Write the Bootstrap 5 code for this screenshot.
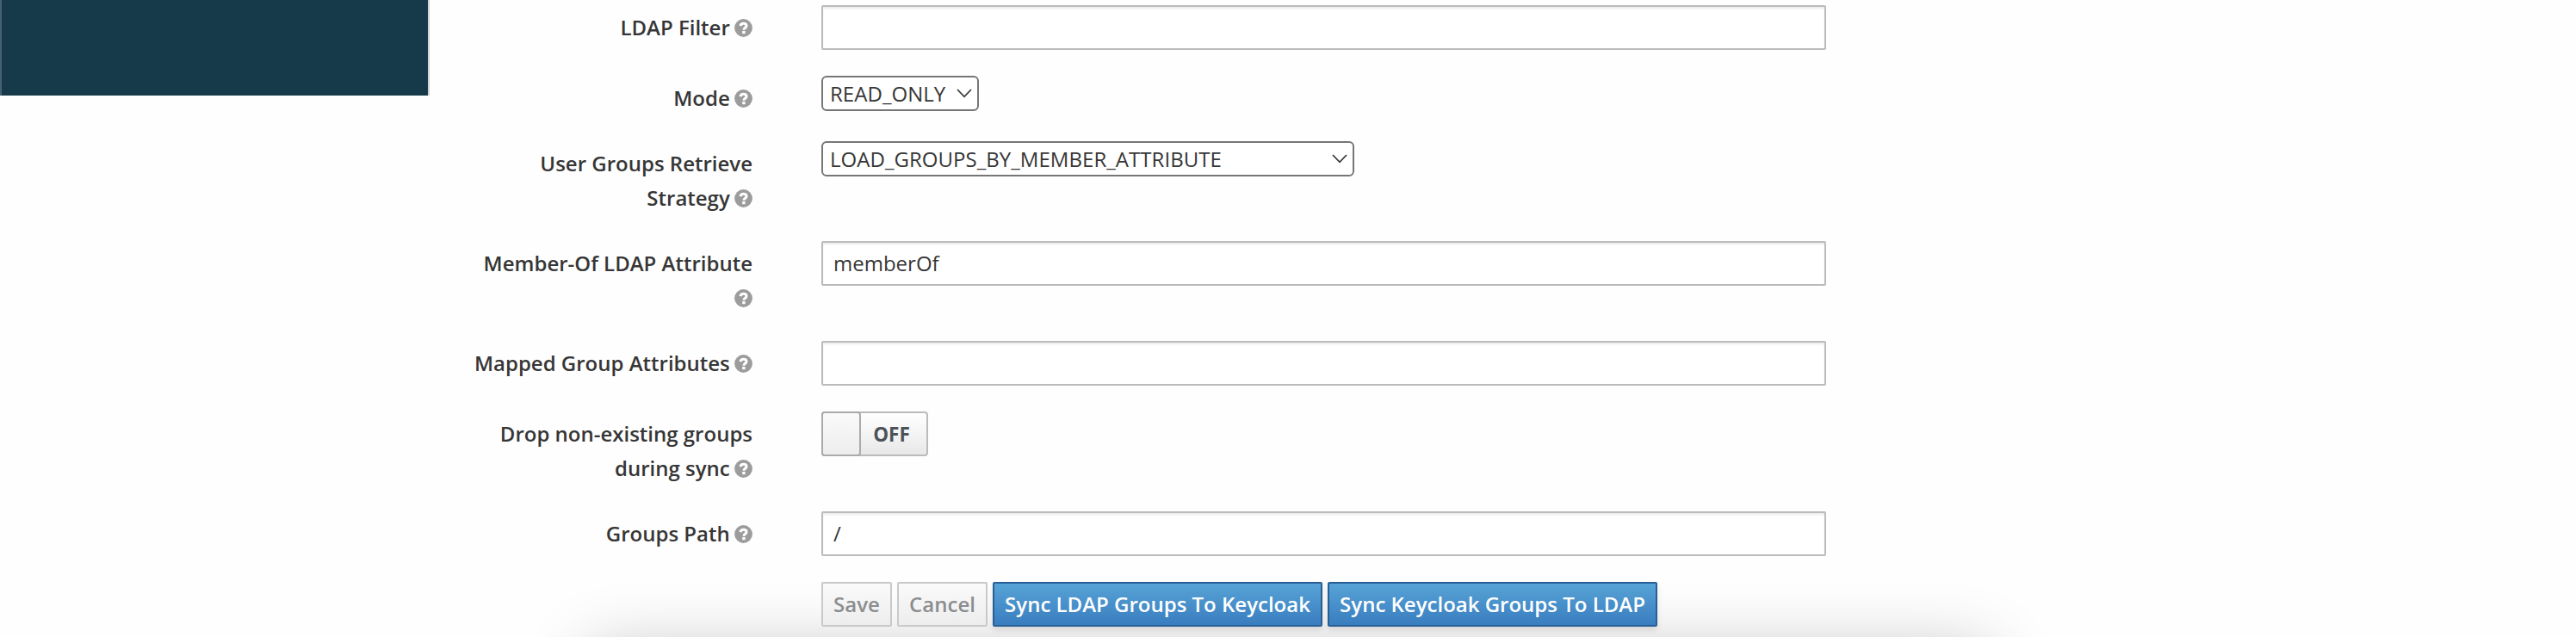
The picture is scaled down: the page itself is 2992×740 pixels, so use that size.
<!DOCTYPE html>
<html lang="en">
<head>
<meta charset="utf-8">
<title>LDAP group mapper</title>
<link href="https://cdn.jsdelivr.net/npm/bootstrap@5.3.0/dist/css/bootstrap.min.css" rel="stylesheet">
<style>
body{font-family:"Open Sans",sans-serif;font-size:24px;line-height:40px;color:#363636;background:#fefefe}
.shell{height:740px;z-index:0}
.side{width:499px;height:111px;background:#173a4b;border-left:2px solid #456270;border-right:2px solid #d1d1d1}
.mapper{width:1622px;padding-top:6px}
.field{display:grid;grid-template-columns:375px 1167px;column-gap:80px;margin-bottom:30px;align-items:start}
.field>label{padding-top:6px;font-weight:600;text-align:right}
.help{width:21px;height:21px;vertical-align:-2px;margin-left:-1px}
.form-control{height:52px;padding:2px 12px 4px;border:2px solid #bbb;border-radius:2px;font-size:24px;color:#363636;box-shadow:inset 0 2px 2px rgba(3,3,3,.075)}
.form-select{height:41px;padding:0 20px 0 8px;border:2px solid #767676;border-radius:6px;font-size:24px;line-height:37px;letter-spacing:.04px;color:#363636;background-color:#fff;background-image:url("data:image/svg+xml,%3Csvg xmlns='http://www.w3.org/2000/svg' viewBox='0 0 18 11'%3E%3Cpath d='M1 1l8 8.3L17 1' fill='none' stroke='%23363636' stroke-width='1.7'/%3E%3C/svg%3E");background-size:18px 11px;background-position:right 6px top 13px}
.mode{width:183px}
.strategy{width:619px}
.toggle{width:124px;height:52px;border:2px solid #bbb;border-radius:4px;background:linear-gradient(#fff,#e8e8e8);color:#4d5258;font-size:22.5px;font-weight:700}
.knob{width:46px;height:52px;margin:-2px 0 -2px -2px;border:2px solid #aaa;border-radius:4px;background:linear-gradient(#fafafa,#ededed)}
.toggle .state{width:71px;padding-top:2px}
.btn{height:52px;border-width:2px;border-radius:2px;font-size:24px;font-weight:600;line-height:40px;white-space:nowrap;padding:4px 0}
.btn-plain:disabled{color:#8b8d8f;background:linear-gradient(#fafafa,#ededed);border-color:#c9c9c9;opacity:1}
.btn-sync{color:#fff;background:linear-gradient(#57a3d6,#397dbf);border-color:#285f95;box-shadow:0 4px 6px rgba(3,3,3,.1)}
.w-save{width:82px}.w-cancel{width:105px}.w-sync{width:383px}
.actions{margin-left:455px;gap:6px}
.glow{left:685px;right:682px;top:755px;height:200px;z-index:-1;box-shadow:0 0 78px rgba(0,0,0,.24)}
</style>
</head>
<body>
<svg class="d-none"><symbol id="q" viewBox="0 0 21 21"><circle cx="10.5" cy="10.5" r="10.4" fill="#9c9c9c"/><path d="M6.9 8.1C7.4 6 8.7 5.2 10.5 5.2c2 0 3.5 1 3.5 2.7 0 2.4-3 2.4-3 4.8" fill="none" stroke="#fefefe" stroke-width="3.1"/><path d="M9.2 14h3.4v3.2H9.2z" fill="#fefefe"/></symbol></svg>
<div class="shell position-relative overflow-hidden">
<div class="d-flex">
  <aside class="side flex-shrink-0"></aside>
  <main class="mapper">
    <div class="field"><label for="filter">LDAP Filter <svg class="help"><use href="#q"/></svg></label><input id="filter" class="form-control"></div>
    <div class="field"><label for="mode">Mode <svg class="help"><use href="#q"/></svg></label><select id="mode" class="form-select mode"><option>READ_ONLY</option></select></div>
    <div class="field"><label for="strategy">User Groups Retrieve<br>Strategy <svg class="help"><use href="#q"/></svg></label><select id="strategy" class="form-select strategy"><option>LOAD_GROUPS_BY_MEMBER_ATTRIBUTE</option></select></div>
    <div class="field"><label for="member">Member-Of LDAP Attribute<br><svg class="help"><use href="#q"/></svg></label><input id="member" class="form-control" value="memberOf"></div>
    <div class="field"><label for="mapped">Mapped Group Attributes <svg class="help"><use href="#q"/></svg></label><input id="mapped" class="form-control"></div>
    <div class="field"><label>Drop non-existing groups<br>during sync <svg class="help"><use href="#q"/></svg></label><div class="toggle d-flex align-items-center"><span class="knob"></span><span class="state text-center">OFF</span></div></div>
    <div class="field"><label for="path">Groups Path <svg class="help"><use href="#q"/></svg></label><input id="path" class="form-control" value="/"></div>
    <div class="actions d-flex">
      <button class="btn btn-plain w-save" disabled>Save</button>
      <button class="btn btn-plain w-cancel" disabled>Cancel</button>
      <button class="btn btn-sync w-sync">Sync LDAP Groups To Keycloak</button>
      <button class="btn btn-sync w-sync">Sync Keycloak Groups To LDAP</button>
    </div>
  </main>
</div>
<div class="glow position-absolute"></div>
</div>
<script src="https://cdn.jsdelivr.net/npm/bootstrap@5.3.0/dist/js/bootstrap.bundle.min.js"></script>
</body>
</html>
